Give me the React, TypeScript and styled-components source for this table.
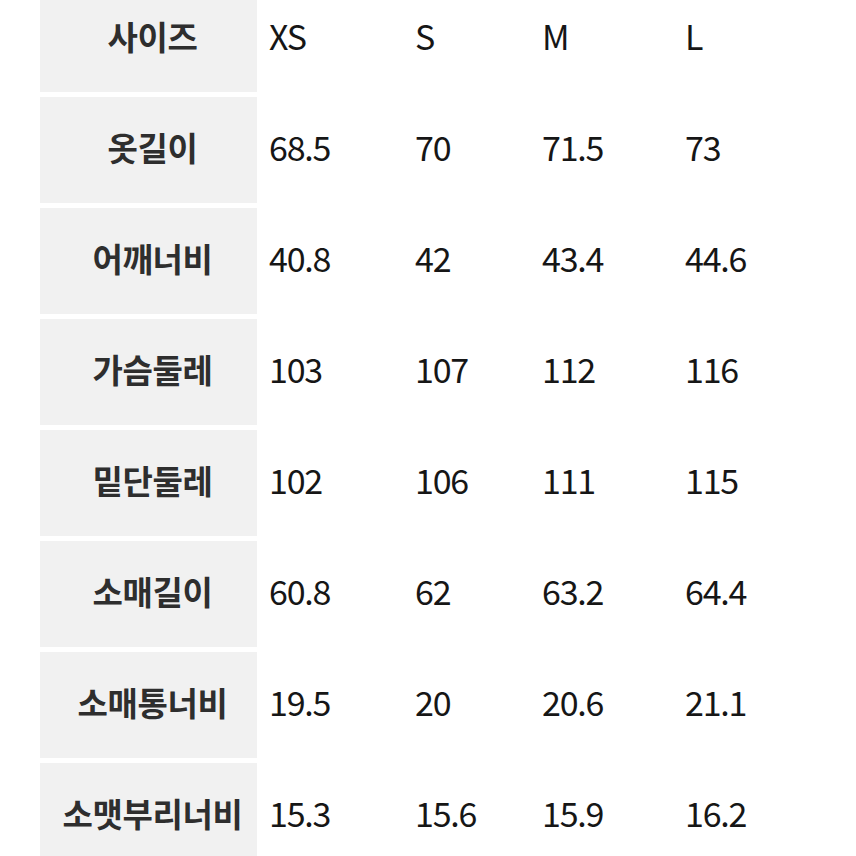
import styled, { createGlobalStyle } from 'styled-components';

const GlobalStyle = createGlobalStyle`
    html, body {
        margin: 0;
        padding: 0;
        background: #ffffff;
        overflow: hidden;
    }
`;

const rows: { label: string; values: string[] }[] = [
    { label: '사이즈', values: ['XS', 'S', 'M', 'L'] },
    { label: '옷길이', values: ['68.5', '70', '71.5', '73'] },
    { label: '어깨너비', values: ['40.8', '42', '43.4', '44.6'] },
    { label: '가슴둘레', values: ['103', '107', '112', '116'] },
    { label: '밑단둘레', values: ['102', '106', '111', '115'] },
    { label: '소매길이', values: ['60.8', '62', '63.2', '64.4'] },
    { label: '소매통너비', values: ['19.5', '20', '20.6', '21.1'] },
    { label: '소맷부리너비', values: ['15.3', '15.6', '15.9', '16.2'] },
];

const Page = styled.div`
    width: 856px;
    height: 856px;
    overflow: hidden;
    font-family: 'Noto Sans CJK KR', 'Noto Sans', sans-serif;
`;

const Table = styled.div`
    display: flex;
    flex-direction: column;
    gap: 5px;
    /* the screenshot is cropped, the first row is partly above the top edge */
    margin-top: -14px;
    padding-left: 40px;
`;

const Row = styled.div`
    display: grid;
    grid-template-columns: 217px 12px 146px 127px 143px 1fr;
    height: 106px;
    align-items: center;
`;

const Label = styled.div`
    grid-column: 1;
    height: 100%;
    display: flex;
    align-items: center;
    justify-content: center;
    padding-left: 8px;
    padding-bottom: 6px;
    box-sizing: border-box;
    background: #f1f1f1;
    color: #2e2e2e;
    font-size: 33px;
    font-weight: 700;
    letter-spacing: -0.4px;
    white-space: nowrap;
`;

const Value = styled.div<{ $col: number }>`
    grid-column: ${({ $col }) => $col + 3};
    padding-bottom: 7px;
    color: #161616;
    font-size: 34px;
    font-weight: 400;
    letter-spacing: -1.2px;
    font-feature-settings: 'pnum';
    white-space: nowrap;
`;

export default function App() {
    return (
        <Page>
            <GlobalStyle />
            <Table>
                {rows.map(row => (
                    <Row key={row.label}>
                        <Label>{row.label}</Label>
                        {row.values.map((value, i) => (
                            <Value key={i} $col={i}>
                                {value}
                            </Value>
                        ))}
                    </Row>
                ))}
            </Table>
        </Page>
    );
}
